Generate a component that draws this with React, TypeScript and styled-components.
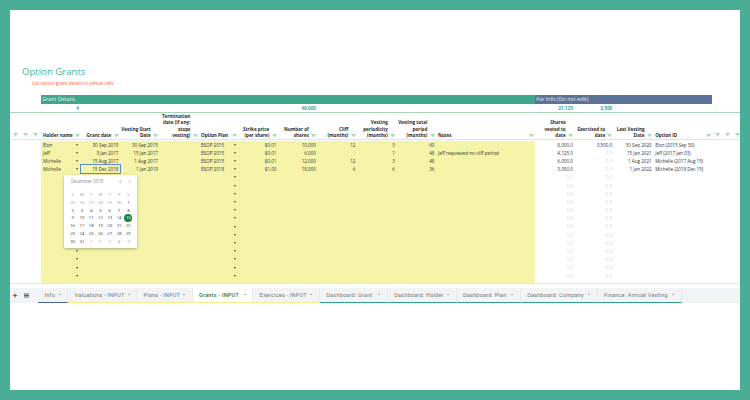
import styled, { createGlobalStyle } from 'styled-components';

const GlobalStyle = createGlobalStyle`
  html, body { margin: 0; padding: 0; background: #fff; }
`;

const COLUMNS = '11px 10px 10px repeat(10, 39.5px) 99px repeat(3, 39.4px) 59.8px 10px 10px 10px';
const BODY_FONT = '"Open Sans", "Noto Sans", sans-serif';

const Frame = styled.div`
  width: 750px;
  height: 400px;
  box-sizing: border-box;
  border: 10px solid #4aae96;
  overflow: hidden;
  background: #fff;
  display: flex;
  flex-direction: column;
  font-family: ${BODY_FONT};
`;

const Heading = styled.div`
  height: 84.5px;
  box-sizing: border-box;
  padding: 54.5px 0 0 12px;
  flex: none;
`;

const Title = styled.div`
  font-size: 9.6px;
  line-height: 13px;
  color: #3fb59a;
`;

const Subtitle = styled.div`
  font-size: 4.65px;
  line-height: 7px;
  margin: 2px 0 0 10px;
  color: #f4623f;
`;

const BandRow = styled.div`
  display: flex;
  flex: none;
  height: 9.5px;
  padding-left: 31px;
`;

const Band = styled.div<{ $w: number; $c: string }>`
  width: ${(p) => p.$w}px;
  background: ${(p) => p.$c};
  color: #e6f0ec;
  font-size: 5.4px;
  line-height: 9.5px;
  padding-left: 1.2px;
  box-sizing: border-box;
`;

const Row = styled.div`
  display: grid;
  grid-template-columns: ${COLUMNS};
  flex: none;
`;

const TotalsRow = styled(Row)`
  height: 8px;
  border-bottom: 1px solid #a8d5b5;
  box-sizing: content-box;
  font-size: 4.7px;
  line-height: 8px;
  font-weight: 700;
  color: #36a98e;
`;

const TotalCell = styled.div<{ $col: number }>`
  grid-column: ${(p) => p.$col};
  text-align: right;
  padding-right: 1.5px;
`;

const HeaderRow = styled(Row)`
  height: 26px;
  border-bottom: 1.5px solid #dfe3ec;
`;

const HeaderCell = styled.div<{ $left?: boolean }>`
  display: flex;
  align-items: flex-end;
  justify-content: ${(p) => (p.$left ? 'space-between' : 'flex-end')};
  gap: 2.2px;
  padding: 0 1.3px 1.2px 2px;
  font-size: 4.6px;
  line-height: 6.3px;
  font-weight: 700;
  color: #2b2b2b;
  text-align: right;
  white-space: nowrap;
`;

const NarrowHeader = styled(HeaderCell)`
  padding: 0 0 1.6px;
  justify-content: center;
`;

const Funnel = styled.svg`
  width: 5.2px;
  height: 3.6px;
  flex: none;
  margin-bottom: 0.8px;
  fill: #a6d8b9;
`;

const Body = styled.div`
  position: relative;
  flex: none;
  padding-top: 0.6px;
  border-bottom: 1px solid #e4e6e8;
`;

const DataRow = styled(Row)<{ $h?: number }>`
  height: ${(p) => p.$h ?? 8.2}px;
  font-size: 4.6px;
  line-height: 8.2px;
  color: #333;
  white-space: nowrap;
`;

const Cell = styled.div<{ $yellow?: boolean; $right?: boolean; $faint?: boolean; $active?: boolean }>`
  background: ${(p) => (p.$yellow ? '#f5f3a7' : 'transparent')};
  text-align: ${(p) => (p.$right ? 'right' : 'left')};
  color: ${(p) => (p.$faint ? '#d6d6d6' : 'inherit')};
  padding: 0 1.5px 0 2px;
  position: relative;
  min-width: 0;
  ${(p) => p.$active && 'outline: 1px solid #5b8ec9; outline-offset: -0.2px; z-index: 1;'}
`;

const Caret = styled.span`
  position: absolute;
  right: 2.8px;
  top: 3.1px;
  width: 0;
  height: 0;
  border-left: 1.8px solid transparent;
  border-right: 1.8px solid transparent;
  border-top: 2px solid #444;
`;

const Calendar = styled.div`
  position: absolute;
  left: 54px;
  top: 34.5px;
  width: 73px;
  height: 73px;
  box-sizing: border-box;
  padding: 3.5px 5px 0 4px;
  background: #fff;
  border-radius: 1px;
  box-shadow: 0 1px 3px rgba(0, 0, 0, 0.3);
  z-index: 2;
  font-family: Roboto, sans-serif;
`;

const CalendarHeader = styled.div`
  display: flex;
  align-items: center;
  height: 7px;
  padding-left: 3px;
  font-size: 4.6px;
  color: #9aa0a6;
  margin-bottom: 5.5px;
`;

const MonthName = styled.span`
  flex: 1;
`;

const Chevron = styled.svg`
  width: 5px;
  height: 5px;
  margin-left: 4.5px;
  fill: none;
  stroke: #555;
  stroke-width: 0.8;
`;

const DayGrid = styled.div`
  display: grid;
  grid-template-columns: repeat(7, 9.3px);
  grid-auto-rows: 7.8px;
`;

const Day = styled.div<{ $muted?: boolean; $selected?: boolean }>`
  display: flex;
  align-items: center;
  justify-content: center;
  width: 8px;
  height: 8px;
  margin-left: 0.6px;
  font-size: 4.3px;
  border-radius: 50%;
  color: ${(p) => (p.$selected ? '#fff' : p.$muted ? '#a4a9ae' : '#4a4e52')};
  background: ${(p) => (p.$selected ? '#188038' : 'transparent')};
`;

const TabBar = styled.div`
  display: flex;
  align-items: stretch;
  flex: none;
  height: 15px;
  margin-top: 3.7px;
  background: #f1f3f4;
  font-family: Roboto, sans-serif;
`;

const BarButtons = styled.div`
  display: flex;
  align-items: center;
  width: 28.3px;
  color: #5f6368;
  flex: none;
`;

const PlusIcon = styled.span`
  font-size: 8px;
  font-weight: 700;
  width: 10px;
  text-align: center;
`;

const ListIcon = styled.svg`
  width: 5px;
  height: 5px;
  margin-left: 4px;
  fill: #5f6368;
`;

const Tab = styled.div<{ $w: number; $line: string; $active?: boolean }>`
  width: ${(p) => p.$w}px;
  box-sizing: border-box;
  flex: none;
  display: flex;
  align-items: center;
  justify-content: space-between;
  padding: 0 6.5px 0 6.3px;
  font-size: 5.5px;
  letter-spacing: 0.22px;
  white-space: nowrap;
  font-weight: ${(p) => (p.$active ? 500 : 400)};
  color: ${(p) => (p.$active ? '#188038' : '#74787c')};
  background: ${(p) => (p.$active ? '#fff' : 'transparent')};
  border-bottom: 1.2px solid ${(p) => p.$line};
  border-right: 0.4px solid #e6e8ea;
`;

const TabCaret = styled.span<{ $active?: boolean }>`
  width: 0;
  height: 0;
  border-left: 1.6px solid transparent;
  border-right: 1.6px solid transparent;
  border-top: 1.8px solid ${(p) => (p.$active ? '#188038' : '#5f6368')};
`;

const FilterIcon = () => (
  <Funnel viewBox="0 0 10 7">
    <path d="M0 0h10L6.3 4.2V7H3.7V4.2z" />
  </Funnel>
);

const HEADERS: { lines: string[]; left?: boolean }[] = [
  { lines: ['Holder name'], left: true },
  { lines: ['Grant date'] },
  { lines: ['Vesting Start', 'Date'] },
  { lines: ['Termination', 'date (if any:', 'stops', 'vesting)'] },
  { lines: ['Option Plan'], left: true },
  { lines: ['Strike price', '(per share)'] },
  { lines: ['Number of', 'shares'] },
  { lines: ['Cliff', '(months)'] },
  { lines: ['Vesting', 'periodicity', '(months)'] },
  { lines: ['Vesting total', 'period', '(months)'] },
  { lines: ['Notes'], left: true },
  { lines: ['Shares', 'vested to', 'date'] },
  { lines: ['Exercised to', 'date'] },
  { lines: ['Last Vesting', 'Date'] },
  { lines: ['Option ID'], left: true },
];

const GRANTS = [
  ['Elon', '30 Sep 2015', '30 Sep 2015', '', 'ESOP 2015', '$0.01', '10,000', '12', '3', '60', '', '8,000.0', '3,500.0', '30 Sep 2020', 'Elon (2015 Sep 30)'],
  ['Jeff', '3 Jan 2017', '15 Jan 2017', '', 'ESOP 2015', '$0.01', '6,000', '0', '1', '48', 'Jeff requested no cliff period', '4,125.0', '0.0', '15 Jan 2021', 'Jeff (2017 Jan 03)'],
  ['Michelle', '15 Aug 2017', '1 Aug 2017', '', 'ESOP 2015', '$0.01', '12,000', '12', '3', '48', '', '6,000.0', '0.0', '1 Aug 2021', 'Michelle (2017 Aug 15)'],
  ['Michelle', '15 Dec 2018', '1 Jan 2019', '', 'ESOP 2018', '$1.00', '18,000', '6', '6', '36', '', '3,000.0', '0.0', '1 Jan 2022', 'Michelle (2018 Dec 15)'],
];
const EMPTY_GRANT = ['', '', '', '', '', '', '', '', '', '', '', '0.0', '0.0', '', ''];
const ROWS = [...GRANTS, ...Array.from({ length: 13 }, () => EMPTY_GRANT)];

const LEFT_COLS = [0, 4, 10, 14];
const YELLOW_COUNT = 11;

const DAYS = [
  [25, 26, 27, 28, 29, 30, 1],
  [2, 3, 4, 5, 6, 7, 8],
  [9, 10, 11, 12, 13, 14, 15],
  [16, 17, 18, 19, 20, 21, 22],
  [23, 24, 25, 26, 27, 28, 29],
  [30, 31, 1, 2, 3, 4, 5],
];

const TABS = [
  { name: 'Info', w: 30, line: '#4a6491' },
  { name: 'Valuations - INPUT', w: 69, line: '#f2ee8e' },
  { name: 'Plans - INPUT', w: 55.5, line: '#f2ee8e' },
  { name: 'Grants - INPUT', w: 60.5, line: '#f2ee8e', active: true },
  { name: 'Exercices - INPUT', w: 66.7, line: '#f2ee8e' },
  { name: 'Dashboard: Grant', w: 68, line: '#2ea085' },
  { name: 'Dashboard: Holder', w: 68.7, line: '#2ea085' },
  { name: 'Dashboard: Plan', w: 64.3, line: '#2ea085' },
  { name: 'Dashboard: Company', w: 76.7, line: '#2ea085' },
  { name: 'Finance: Annual Vesting', w: 84, line: '#2ea085' },
];

function App() {
  return (
    <Frame>
      <GlobalStyle />
      <Heading>
        <Title>Option Grants</Title>
        <Subtitle>List option grant details in yellow cells</Subtitle>
      </Heading>

      <BandRow>
        <Band $w={494} $c="#3fa68c">Grant Details</Band>
        <Band $w={177} $c="#5c7299">For Info (Do not edit)</Band>
      </BandRow>

      <TotalsRow>
        <TotalCell $col={4}>4</TotalCell>
        <TotalCell $col={10}>46,000</TotalCell>
        <TotalCell $col={15}>21,125</TotalCell>
        <TotalCell $col={16}>3,500</TotalCell>
      </TotalsRow>

      <HeaderRow>
        {[0, 1, 2].map((i) => (
          <NarrowHeader key={i}><FilterIcon /></NarrowHeader>
        ))}
        {HEADERS.map((h) => (
          <HeaderCell key={h.lines[0]} $left={h.left}>
            <span>
              {h.lines.map((line, i) => (
                <span key={line}>{i > 0 && <br />}{line}</span>
              ))}
            </span>
            <FilterIcon />
          </HeaderCell>
        ))}
        {[0, 1, 2].map((i) => (
          <NarrowHeader key={i}><FilterIcon /></NarrowHeader>
        ))}
      </HeaderRow>

      <Body>
        {ROWS.map((row, r) => (
          <DataRow key={r}>
            <Cell /><Cell /><Cell />
            {row.map((value, c) => (
              <Cell
                key={c}
                $yellow={c < YELLOW_COUNT}
                $right={!LEFT_COLS.includes(c)}
                $faint={value === '0.0' || value === '0'}
                $active={r === 3 && c === 1}
              >
                {value}
                {(c === 0 || c === 4) && <Caret />}
              </Cell>
            ))}
          </DataRow>
        ))}
        <DataRow $h={3.4}>
          <Cell /><Cell /><Cell />
          {EMPTY_GRANT.slice(0, YELLOW_COUNT).map((_, c) => (
            <Cell key={c} $yellow />
          ))}
        </DataRow>

        <Calendar>
          <CalendarHeader>
            <MonthName>December 2018</MonthName>
            <Chevron viewBox="0 0 10 10"><path d="M6.5 2L3.5 5l3 3" /></Chevron>
            <Chevron viewBox="0 0 10 10"><path d="M3.5 2l3 3-3 3" /></Chevron>
          </CalendarHeader>
          <DayGrid>
            {['S', 'M', 'T', 'W', 'T', 'F', 'S'].map((d, i) => (
              <Day key={i} $muted>{d}</Day>
            ))}
            {DAYS.flatMap((week, w) =>
              week.map((d, i) => (
                <Day
                  key={`${w}-${i}`}
                  $muted={(w === 0 && d > 20) || (w === 5 && d < 20)}
                  $selected={w === 2 && d === 15}
                >
                  {d}
                </Day>
              )),
            )}
          </DayGrid>
        </Calendar>
      </Body>

      <TabBar>
        <BarButtons>
          <PlusIcon>+</PlusIcon>
          <ListIcon viewBox="0 0 10 10">
            <path d="M0 1h10v2H0zM0 4h10v2H0zM0 7h10v2H0z" />
          </ListIcon>
        </BarButtons>
        {TABS.map((t) => (
          <Tab key={t.name} $w={t.w} $line={t.line} $active={t.active}>
            {t.name}
            <TabCaret $active={t.active} />
          </Tab>
        ))}
      </TabBar>
    </Frame>
  );
}

export default App;
